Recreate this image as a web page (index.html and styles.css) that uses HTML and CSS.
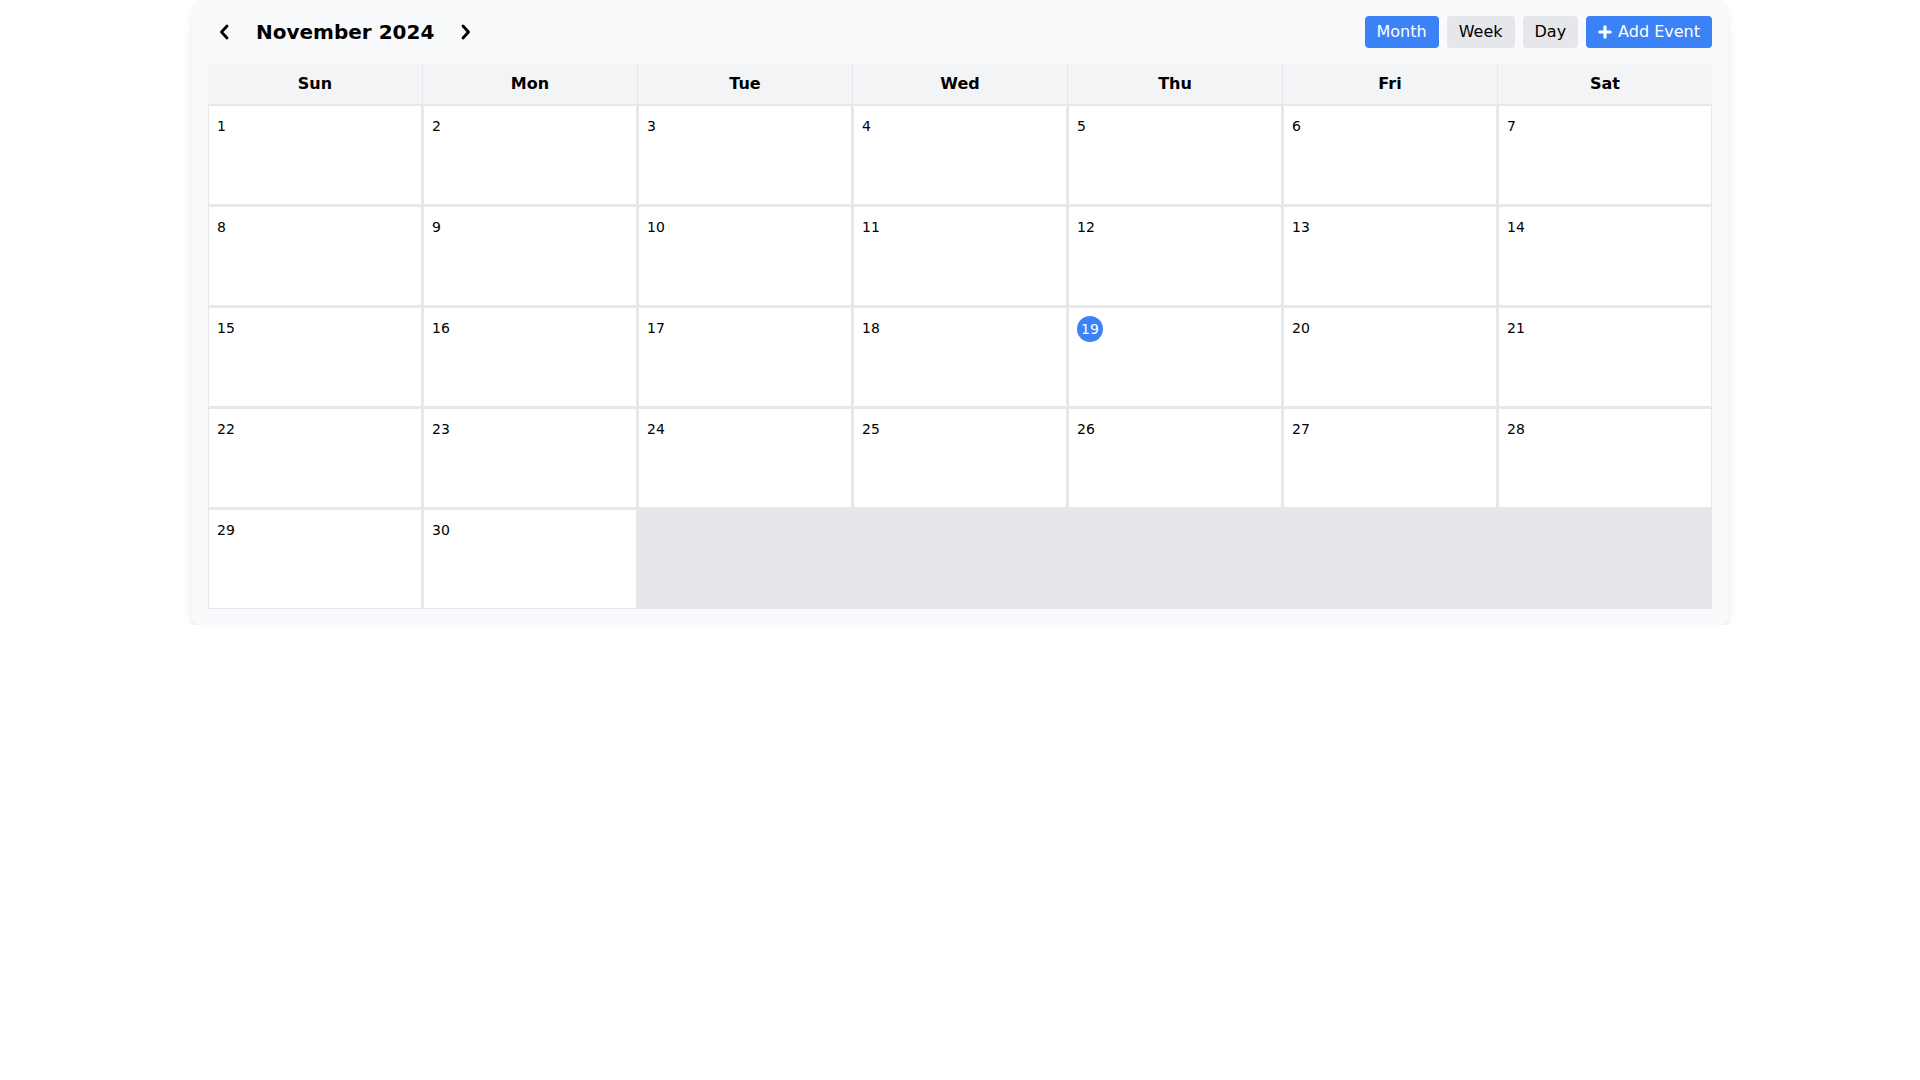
FILE: index.html
```html
<!DOCTYPE html>
<html>
  <head>
    <title>Calendar</title>
    <link rel="stylesheet" href="styles.css">
  </head>
  <body>
    <div class="calendar">
      <div class="toolbar">
        <div class="nav">
          <button class="nav-btn" title="Previous month">
            <svg width="10" height="16" viewBox="0 0 10 16"><polyline points="8,2 2.5,8 8,14" fill="none" stroke="#000" stroke-width="2.8" stroke-linecap="round" stroke-linejoin="round"/></svg>
          </button>
          <h1 class="title">November 2024</h1>
          <button class="nav-btn" title="Next month">
            <svg width="10" height="16" viewBox="0 0 10 16"><polyline points="2,2 7.5,8 2,14" fill="none" stroke="#000" stroke-width="2.8" stroke-linecap="round" stroke-linejoin="round"/></svg>
          </button>
        </div>
        <div class="views">
          <button class="btn btn-primary">Month</button>
          <button class="btn">Week</button>
          <button class="btn">Day</button>
          <button class="btn btn-primary btn-add">
            <svg width="14" height="14" viewBox="0 0 14 14"><path d="M7 1.8V12.2M1.8 7H12.2" stroke="#fff" stroke-width="3.2" stroke-linecap="round"/></svg>
            Add Event
          </button>
        </div>
      </div>

      <div class="grid">
        <div class="weekday">Sun</div>
        <div class="weekday">Mon</div>
        <div class="weekday">Tue</div>
        <div class="weekday">Wed</div>
        <div class="weekday">Thu</div>
        <div class="weekday">Fri</div>
        <div class="weekday">Sat</div>

        <div class="day"><span class="num">1</span></div>
        <div class="day"><span class="num">2</span></div>
        <div class="day"><span class="num">3</span></div>
        <div class="day"><span class="num">4</span></div>
        <div class="day"><span class="num">5</span></div>
        <div class="day"><span class="num">6</span></div>
        <div class="day"><span class="num">7</span></div>

        <div class="day"><span class="num">8</span></div>
        <div class="day"><span class="num">9</span></div>
        <div class="day"><span class="num">10</span></div>
        <div class="day"><span class="num">11</span></div>
        <div class="day"><span class="num">12</span></div>
        <div class="day"><span class="num">13</span></div>
        <div class="day"><span class="num">14</span></div>

        <div class="day"><span class="num">15</span></div>
        <div class="day"><span class="num">16</span></div>
        <div class="day"><span class="num">17</span></div>
        <div class="day"><span class="num">18</span></div>
        <div class="day"><span class="num today">19</span></div>
        <div class="day"><span class="num">20</span></div>
        <div class="day"><span class="num">21</span></div>

        <div class="day"><span class="num">22</span></div>
        <div class="day"><span class="num">23</span></div>
        <div class="day"><span class="num">24</span></div>
        <div class="day"><span class="num">25</span></div>
        <div class="day"><span class="num">26</span></div>
        <div class="day"><span class="num">27</span></div>
        <div class="day"><span class="num">28</span></div>

        <div class="day"><span class="num">29</span></div>
        <div class="day"><span class="num">30</span></div>
      </div>
    </div>
  </body>
</html>
```

FILE: styles.css
```css
body {
  margin: 0;
  font-family: "DejaVu Sans", sans-serif;
  color: #000;
  background-color: #fff;
}

.calendar {
  max-width: 1536px;
  margin: 0 auto;
  padding: 16px;
  box-sizing: border-box;
  background-color: #f9fafb;
  border-radius: 8px;
  box-shadow: 0 10px 15px -3px rgba(0, 0, 0, 0.1), 0 4px 6px -2px rgba(0, 0, 0, 0.05);
}

.toolbar {
  display: flex;
  justify-content: space-between;
  align-items: center;
  height: 32px;
  margin-bottom: 16px;
}
.nav {
  display: flex;
  align-items: center;
  gap: 16px;
}
.nav-btn {
  display: flex;
  align-items: center;
  justify-content: center;
  width: 32px;
  height: 32px;
  padding: 0;
  border: none;
  background: none;
  cursor: pointer;
}
.title {
  margin: 0;
  font-size: 20px;
  line-height: 28px;
  font-weight: bold;
}

.views {
  display: flex;
  gap: 8px;
}
.btn {
  padding: 4px 12px;
  border: none;
  border-radius: 4px;
  font-family: inherit;
  font-size: 16px;
  line-height: 24px;
  color: #000;
  background-color: #e5e7eb;
  cursor: pointer;
}
.btn-primary {
  color: #fff;
  background-color: #3b82f6;
}
.btn-add {
  display: flex;
  align-items: center;
  gap: 6px;
}

.grid {
  display: grid;
  grid-template-columns: repeat(7, 1fr);
  gap: 1px;
  background-color: #e5e7eb;
}
.weekday {
  padding: 8px;
  text-align: center;
  font-weight: bold;
  font-size: 16px;
  line-height: 24px;
  background-color: #f3f4f6;
}
.day {
  height: 100px;
  box-sizing: border-box;
  padding: 8px;
  border: 1px solid #e5e7eb;
  background-color: #fff;
  font-size: 14px;
}
.num {
  display: flex;
  align-items: center;
  width: fit-content;
  height: 24px;
}
.num.today {
  width: 26px;
  height: 26px;
  justify-content: center;
  border-radius: 50%;
  color: #fff;
  background-color: #3b82f6;
}
```
